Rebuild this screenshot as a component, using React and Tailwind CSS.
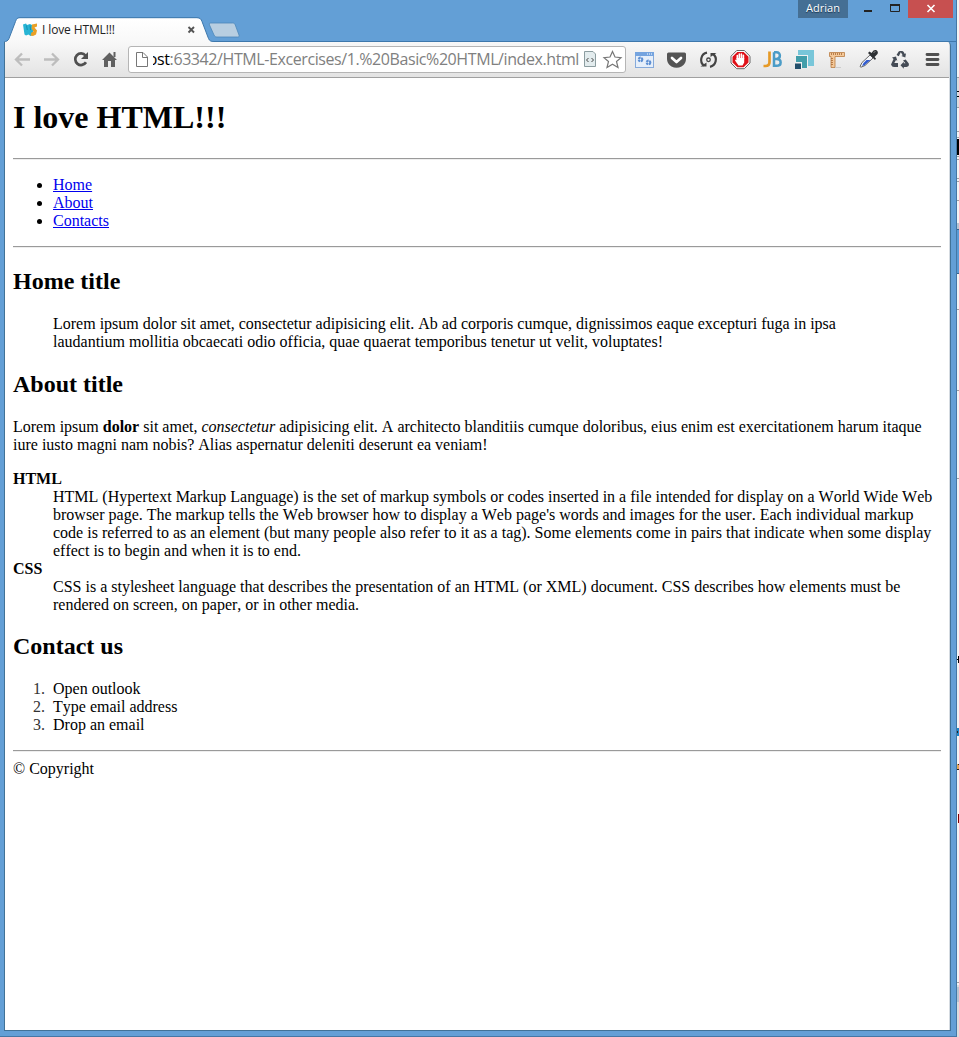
import React from "react";

const lineBase = "block w-fit whitespace-nowrap";

function Line({ children, className = "" }) {
  return <span className={`${lineBase} ${className}`}>{children}</span>;
}

function Rule() {
  return <hr className="h-[2px] border-0 border-t border-t-[#9a9a9a] bg-[#eeeeee]" />;
}

function Icon({ children }) {
  return (
    <svg className="h-6 w-8 shrink-0" viewBox="0 0 32 24" fill="none">
      {children}
    </svg>
  );
}

function TitleBar() {
  return (
    <div className="relative flex h-[42px] w-full items-start">
      <svg className="mt-[17px] h-[25px] w-[250px] shrink-0" viewBox="0 0 250 25" fill="none">
        <defs>
          <linearGradient id="tab" x1="0" y1="0" x2="0" y2="1">
            <stop offset="0" stopColor="#ffffff" />
            <stop offset="1" stopColor="#f8f8f8" />
          </linearGradient>
        </defs>
        <path d="M4 25C6 24.500 8 24 9 21.500L15.500 4.500C16.500 1.500 17.500 1 20 1H197C200 1 201 2 202 4.500L208.500 21.500C209.500 24 211 24.500 214 24.500V25Z" fill="url(#tab)" />
        <path d="M4 25C6 24.500 8 24 9 21.500L15.500 4.500C16.500 1.500 17.500 .7 20 .7H197C200 .7 201 2 202 4.500L208.500 21.500C209.500 24 211 24.500 214 24.500H250" stroke="#3e78ac" />
        <path d="M211 6H232.500C234 6 234.700 6.500 235.300 8L239 18C239.500 19.500 239 20 237.500 20H217C215.500 20 214.700 19.500 214 18L209.500 8C209 6.500 209.300 6 211 6Z" fill="#b8cee1" stroke="#4b86b9" strokeWidth=".8" />
        <path d="M23 7.500L26 6.500L27 8L30 7L33 8.500V18L30.500 19L28.500 17.500L26 18.500L24.500 17.500Z" fill="#27b4d4" />
        <path d="M26.500 8.500L27.300 13M30 8.500L30.500 13" stroke="#0c86ab" strokeWidth=".8" />
        <path d="M32 7.500L37 6.500V9.500L34.500 10.500L37 13.500L36 17.500L33 19L30.500 18.500L31.500 15.500L33.500 14.500L31.500 11.500Z" fill="#e9a025" />
        <path d="M188.500 10L194 15.500M194 10L188.500 15.500" stroke="#555555" strokeWidth="1.900" />
      </svg>
      <span className="absolute left-[42px] top-[21px] whitespace-nowrap font-['Open_Sans',sans-serif] text-[12px] leading-[18px] tracking-[-0.12px] text-[#222222]">
        I love HTML!!!
      </span>
      <div className="h-[25px] min-w-0 grow self-end border-b border-[#3e78ac]" />
      <div className="absolute right-[3px] top-0 flex h-[18px]">
        <div className="w-[50px] bg-[#456f94] text-center font-['Open_Sans',sans-serif] text-[11px] leading-[16px] text-white [text-shadow:0_1px_1px_#17334c]">
          Adrian
        </div>
        <svg className="h-[18px] w-[60px]" viewBox="0 0 60 18" fill="none">
          <path d="M16 11H24" stroke="#222222" strokeWidth="2" />
          <path d="M42.500 4.500H51.500V11.500H42.500Z" stroke="#222222" />
          <path d="M42 5H52" stroke="#222222" strokeWidth="2" />
        </svg>
        <svg className="h-[18px] w-[45px] bg-[#c75050]" viewBox="0 0 45 18" fill="none">
          <path d="M19.500 5L26.500 12M26.500 5L19.500 12" stroke="#ffffff" strokeWidth="1.600" />
        </svg>
      </div>
    </div>
  );
}

function Extensions() {
  return (
    <div className="flex items-center">
      <Icon>
        <rect x="7.500" y="4.500" width="18" height="15" fill="#e6effa" stroke="#86aada" />
        <path d="M7 4H26V8H7Z" fill="#75a4df" />
        <path d="M19 6H20M21 6H22M23 6H24" stroke="#ffffff" />
        <circle cx="12.500" cy="11.500" r="1.800" stroke="#5f90d3" strokeWidth="2.200" strokeDasharray="2.200 .6" />
        <circle cx="20.500" cy="14.500" r="1.800" stroke="#5f90d3" strokeWidth="2.200" strokeDasharray="2.200 .6" />
      </Icon>
      <Icon>
        <path d="M8.500 4.500H24.500Q26 4.500 26 6V11Q26 16 21.500 18.500Q16.500 21 11.500 18.500Q7 16 7 11V6Q7 4.500 8.500 4.500Z" fill="#555555" />
        <path d="M12 10L16.500 14L21 10" stroke="#ffffff" strokeWidth="2.700" strokeLinecap="round" strokeLinejoin="round" />
      </Icon>
      <Icon>
        <path d="M15 4.700A7.200 7.200 0 0 0 12 17.500M18 18.800A7.200 7.200 0 0 0 21 6" stroke="#444444" strokeWidth="2.200" />
        <path d="M8.500 18.500H14.500V14.500ZM24.500 5H18.500V9Z" fill="#444444" />
        <circle cx="16.500" cy="11.800" r="1.800" stroke="#444444" strokeWidth="1.300" />
      </Icon>
      <Icon>
        <path d="M12.700 2.500H20.300L26 8.200V15L20.300 20.700H12.700L7 15V8.200Z" fill="#ffffff" stroke="#666666" />
        <path d="M13.300 4H19.700L24.500 8.800V14.400L19.700 19.200H13.300L8.500 14.400V8.800Z" fill="#df1118" />
        <path d="M13.300 11V7.500M15.300 11V6M17.400 11V6M19.400 11V7.200" stroke="#ffffff" strokeWidth="1.600" strokeLinecap="round" />
        <path d="M12.500 10H20.200V14.500L18.500 17.500H14.500L11 12.500L11.700 11.500L12.500 12.200Z" fill="#ffffff" />
      </Icon>
      <Icon>
        <path d="M13.500 3.500V14Q13.500 18 9.500 18H7.500" stroke="#e69a27" strokeWidth="2.700" />
        <path d="M18 4.200V17.800H20.500C26 17.800 26 11 20.500 11H18M20.500 11C25 11 25 4.200 20.500 4.200H18" stroke="#4b9cc7" strokeWidth="2.500" />
      </Icon>
      <Icon>
        <path d="M10 2H26V18H10Z" fill="#78c6d9" />
        <path d="M7 7H20V20H7Z" fill="#f1f1f1" />
        <path d="M8 8H19V20H8Z" fill="#429eaa" />
        <path d="M7 14H14V21H7Z" fill="#f1f1f1" />
        <path d="M7 15.500H13V21H7Z" fill="#234f6b" />
      </Icon>
      <Icon>
        <path d="M9.500 4.500H24.500V8.500H15V19.500H11V8.500H9.500Z" fill="#f4c899" stroke="#b97c43" strokeWidth=".8" />
        <path d="M11.500 5V7M13.500 5V7M15.500 5V7M17.500 5V7M19.500 5V7M21.500 5V7M11 10.500H13M11 12.500H13M11 14.500H13M11 16.500H13" stroke="#a96c36" strokeWidth=".8" />
        <path d="M15 19.500H21" stroke="#cccccc" />
      </Icon>
      <Icon>
        <path d="M18 7L21 10L13 17.500L9 19.200L8 18.500L10 14.500Z" fill="#f3f5fa" stroke="#666666" />
        <path d="M11.500 15L14.500 12H18.500L12.500 17.300L10 18Z" fill="#315bd0" />
        <path d="M16 5L23 12L24 10.500L22.500 9L25.500 6C27 3.500 24 .8 21.500 2.500L19.500 5L17.500 3.500Z" fill="#2e3134" />
        <path d="M21.500 4.500L23.500 3.500" stroke="#888888" />
      </Icon>
      <Icon>
        <g fill="#444b55">
          <path d="M12.500 7L14.500 3.700Q15 3 16 3H18Q19 3 19.700 4L20.800 6L22 5.200L21.300 9.500L17.300 8L18.700 7.200L16.800 4.300L14.800 8.300Z" />
          <path d="M8 9.500L12 8.500L13.300 12.700L12 12L10.300 15H14V19H10Q7.800 19 7 16.500L9.500 11Z" />
          <path d="M21.700 11.500L24.800 15.500Q25.500 18.500 22.500 19H19.800V20.700L16.500 17.200L19.800 13.800V15.300H21.500L19 12.500Z" />
        </g>
      </Icon>
      <Icon>
        <path d="M11 6.500H22M11 11.500H22M11 16.500H22" stroke="#505050" strokeWidth="2.800" strokeLinecap="round" />
      </Icon>
    </div>
  );
}

function Toolbar() {
  return (
    <div className="flex h-9 items-center border-b border-[#a0a0a0] bg-linear-to-b from-[#f8f8f8] to-[#e3e3e3]">
      <svg className="h-[35px] w-[123px] shrink-0" viewBox="5 42 123 35" fill="none">
        <path d="M30 59.500H17M22 53.500L16 59.500L22 65.500" stroke="#bdbdbd" strokeWidth="2.300" />
        <path d="M44 59.500H57M52 53.500L58 59.500L52 65.500" stroke="#bdbdbd" strokeWidth="2.300" />
        <path d="M85.500 55.500A5.800 5.800 0 1 0 86 62.300" stroke="#505050" strokeWidth="2.700" />
        <path d="M88 52V59H81Z" fill="#505050" />
        <path d="M102 60L109.500 52.500L117 60H115V67H111V61H108V67H104V60Z" fill="#606060" />
        <path d="M113.500 52H115.500V57H113.500Z" fill="#606060" />
      </svg>
      <div className="flex h-[27px] w-[498px] shrink-0 items-center rounded-[3px] border border-[#b5b5b5] bg-white">
        <svg className="h-[25px] w-[24px] shrink-0" viewBox="129 47 24 25" fill="none">
          <path d="M136.500 52.500H143L147.500 57V66.500H136.500ZM142.500 52.500V57.500H147.500" stroke="#777777" />
        </svg>
        <div className="flex h-[25px] w-[426px] justify-end overflow-hidden whitespace-nowrap font-['Open_Sans',sans-serif] text-[16px] leading-[24px] tracking-[-0.41px] text-[#808080]">
          <span className="text-black">ost</span>:63342/HTML-Excercises/1.%20Basic%20HTML/index.html
        </div>
        <svg className="h-[25px] w-[46px] shrink-0" viewBox="579 47 46 25" fill="none">
          <path d="M584.500 51.500H593L595.500 54V66.500H584.500Z" fill="#e3ecee" stroke="#8c9da0" />
          <path d="M588.500 58L586.500 60L588.500 62M591.500 58L593.500 60L591.500 62" stroke="#444444" />
          <path d="M612.500 51.500L615 57L621 57.600L616.500 61.500L618 67.500L612.500 64.300L607 67.500L608.500 61.500L604 57.600L610 57Z" stroke="#777777" strokeWidth="1.200" />
        </svg>
      </div>
      <div className="ml-[2px] mt-px">
        <Extensions />
      </div>
    </div>
  );
}

function Heading({ children }) {
  return <h2 className="my-[19.92px] text-[24px] font-bold leading-[27px]">{children}</h2>;
}

function Step({ number, children }) {
  return (
    <li className="flex">
      <span className="w-5 shrink-0 text-[#333333]">{number}.</span>
      <span>{children}</span>
    </li>
  );
}

function Page() {
  return (
    <main className="flow-root grow bg-white px-2 font-['Liberation_Serif',serif] text-[16px] leading-[18px] text-black [font-kerning:none]">
      <h1 className="my-[21.44px] text-[32px] font-bold leading-[37px]">
        <Line>I love HTML!!!</Line>
      </h1>
      <Rule />
      <ul className="my-4 list-disc pl-10">
        <li><a href="#home" className="text-[#0000ee] underline">Home</a></li>
        <li><a href="#about" className="text-[#0000ee] underline">About</a></li>
        <li><a href="#contacts" className="text-[#0000ee] underline">Contacts</a></li>
      </ul>
      <Rule />
      <Heading>Home title</Heading>
      <blockquote className="mx-10">
        <Line>Lorem ipsum dolor sit amet, consectetur adipisicing elit. Ab ad corporis cumque, dignissimos eaque excepturi fuga in ipsa</Line>
        <Line>laudantium mollitia obcaecati odio officia, quae quaerat temporibus tenetur ut velit, voluptates!</Line>
      </blockquote>
      <Heading>About title</Heading>
      <p>
        <Line>Lorem ipsum <strong>dolor</strong> sit amet, <em>consectetur</em> adipisicing elit. A architecto blanditiis cumque doloribus, eius enim est exercitationem harum itaque</Line>
        <Line>iure iusto magni nam nobis? Alias aspernatur deleniti deserunt ea veniam!</Line>
      </p>
      <dl className="mt-4">
        <dt className="font-bold">HTML</dt>
        <dd className="ml-10">
          <Line>HTML (Hypertext Markup Language) is the set of markup symbols or codes inserted in a file intended for display on a World Wide Web</Line>
          <Line>browser page. The markup tells the Web browser how to display a Web page's words and images for the user. Each individual markup</Line>
          <Line>code is referred to as an element (but many people also refer to it as a tag). Some elements come in pairs that indicate when some display</Line>
          <Line>effect is to begin and when it is to end.</Line>
        </dd>
        <dt className="font-bold">CSS</dt>
        <dd className="ml-10">
          <Line>CSS is a stylesheet language that describes the presentation of an HTML (or XML) document. CSS describes how elements must be</Line>
          <Line>rendered on screen, on paper, or in other media.</Line>
        </dd>
      </dl>
      <Heading>Contact us</Heading>
      <ol className="mb-4 pl-5">
        <Step number={1}>Open outlook</Step>
        <Step number={2}>Type email address</Step>
        <Step number={3}>Drop an email</Step>
      </ol>
      <Rule />
      <footer className="mt-2">© Copyright</footer>
    </main>
  );
}

function Backdrop() {
  return (
    <svg className="h-[1037px] w-[2px] shrink-0" viewBox="0 0 2 1037">
      <path fill="#f4f4f4" d="M0 0H2V1037H0Z" />
      <path fill="#dddddd" d="M0 78H2V107H0ZM0 985H2V1037H0Z" />
      <path fill="#a0a0a0" d="M0 77H2V78H0ZM0 107H2V108H0ZM0 131H2V132H0ZM0 137H2V138H0ZM0 156H2V157H0ZM0 159H2V160H0ZM0 178H2V179H0ZM0 181H2V182H0ZM0 200H2V201H0ZM0 309H2V310H0ZM0 390H2V391H0ZM0 478H2V479H0ZM0 982H2V983H0Z" />
      <path fill="#000000" d="M0 139H2V155H0ZM0 91H2V92H0ZM0 96H2V97H0ZM1 656H2V663H1ZM0 659H2V660H0Z" />
      <path fill="#b8c5d2" d="M0 223H2V229H0ZM0 987H2V1002H0Z" />
      <path fill="#5b9bd5" d="M0 229H2V273H0Z" />
      <path fill="#35648f" d="M0 229H2V230H0ZM0 273H2V274H0Z" />
      <path fill="#1c85c8" d="M0 728H2V736H0Z" />
      <path fill="#e5a558" d="M0 764H2V769H0Z" />
      <path fill="#222222" d="M1 764H2V765H1ZM0 769H2V770H0ZM0 731H1V733H0Z" />
      <path fill="#800000" d="M1 814H2V823H1Z" />
    </svg>
  );
}

export default function App() {
  return (
    <div className="flex h-[1037px] w-[959px] overflow-hidden bg-[#f4f4f4]">
      <div className="flex h-[1037px] w-[957px] shrink-0 flex-col border-b border-r border-[#4477a5] bg-[#639fd6]">
        <TitleBar />
        <div className="ml-1 flex h-[989px] w-[947px] flex-col rounded-tr-[4px] border-x border-b border-[#417297] bg-[#d5dbe1]">
          <div className="flex w-[945px] grow flex-col overflow-hidden rounded-tr-[3px] pr-px">
            <Toolbar />
            <Page />
          </div>
        </div>
      </div>
      <Backdrop />
    </div>
  );
}
